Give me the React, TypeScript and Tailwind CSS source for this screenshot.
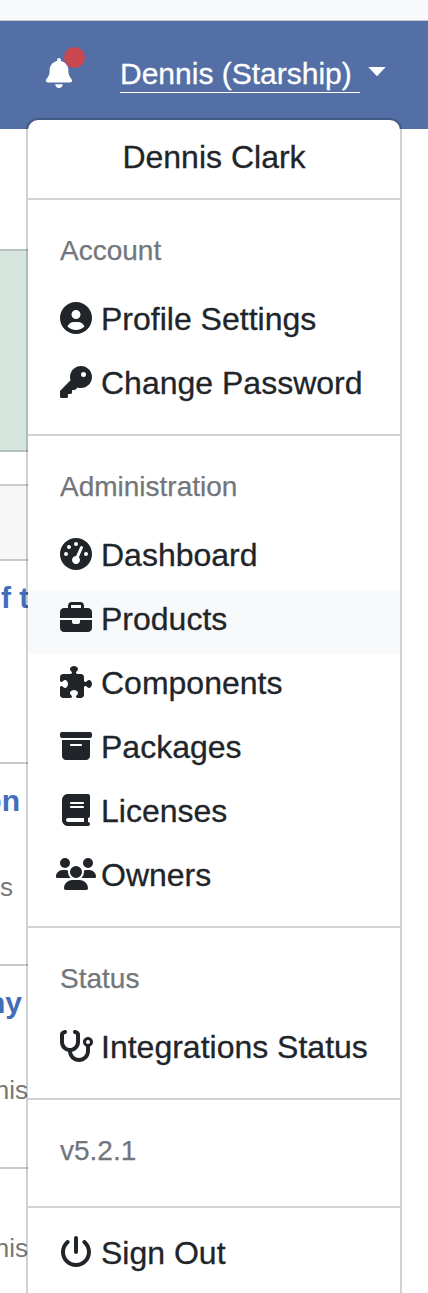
import type { ReactNode } from "react";
import type { IconType } from "react-icons";
import {
  FaBell,
  FaBook,
  FaBoxArchive,
  FaBriefcase,
  FaGaugeHigh,
  FaKey,
  FaPowerOff,
  FaPuzzlePiece,
  FaStethoscope,
  FaUsers,
} from "react-icons/fa6";

function UserCircle({ className }: { className?: string }) {
  return (
    <svg className={className} viewBox="0 0 512 512" fill="currentColor" aria-hidden="true">
      <path
        fillRule="evenodd"
        d="M256 0a256 256 0 1 0 0 512a256 256 0 1 0 0-512zM256 128c39.77 0 72 32.24 72 72s-32.2 72-72 72c-39.76 0-72-32.24-72-72s32.2-72 72-72zM256 448c-52.93 0-100.9-21.53-135.7-56.29C136.5 349.9 176.5 320 224 320h64c47.54 0 87.54 29.88 103.7 71.71C356.9 426.5 308.9 448 256 448z"
      />
    </svg>
  );
}

type ItemProps = { icon: IconType | typeof UserCircle; children: ReactNode; active?: boolean };

function Item({ icon: Icon, children, active }: ItemProps) {
  return (
    <li className={active ? "flex h-16 items-start bg-[#f8f9fa] pl-7" : "flex h-16 items-start pl-7"}>
      <Icon className="mt-3 h-8 w-10 shrink-0" />
      <span className="ml-[5px] mt-[5px] whitespace-nowrap leading-[48px] [-webkit-text-stroke:0.3px]">{children}</span>
    </li>
  );
}

function Heading({ children }: { children: ReactNode }) {
  return (
    <li className="h-[74px] pl-8 pt-[14px] text-[28px] leading-[42px] text-[#72767b] [-webkit-text-stroke:0.25px]">
      {children}
    </li>
  );
}

function Section({ children }: { children: ReactNode }) {
  return <ul className="border-t-2 border-[#d2d2d2] py-4">{children}</ul>;
}

export default function App() {
  return (
    <div className="relative h-[1293px] w-full overflow-hidden bg-white font-['Liberation_Sans',Arial,sans-serif] text-[32px] text-[#212529]">
      <div className="h-[21px] border-b border-[#c3c6cf] bg-[#f8f9fb]" />
      <header className="flex h-[108px] bg-[#546fa6] text-white">
        <div className="relative ml-11 mt-[37px] h-[30px] w-[30px]">
          <FaBell className="size-[30px]" />
          <span className="absolute -top-[11px] left-[20px] size-[21px] rounded-full bg-[#c9474f]" />
        </div>
        <div className="ml-[46px] mt-[33px] h-[39px] w-60 whitespace-pre border-b border-white text-[30px] leading-[39px] [-webkit-text-stroke:0.3px]">
          Dennis (Starship)
        </div>
        <svg className="ml-2 mt-[46px] h-[10px] w-[18px]" viewBox="0 0 18 10" fill="currentColor">
          <path d="M0.3 0H17.7L9 9.2Z" />
        </svg>
      </header>

      <main className="w-7 overflow-hidden whitespace-nowrap text-[26px] leading-[30px] text-[#777777]">
        <div className="mt-[120px] h-[203px] border-y-2 border-[#b3c2bb] bg-[#d6e6de]" />
        <div className="mt-8 h-[77px] border-y-2 border-[#cacaca] bg-[#f7f7f7]" />
        <div className="h-[203px] border-b-2 border-[#cacaca] pl-px pt-5 text-[30px] font-bold leading-[34px] text-[#426ebc]">
          f t
        </div>
        <div className="h-[202px] border-b-2 border-[#cacaca]">
          <div className="flex justify-end pr-2 pt-5 text-[30px] font-bold leading-[34px] text-[#426ebc]">on</div>
          <div className="mt-[54px] flex justify-end pr-[15px]">s</div>
        </div>
        <div className="h-[203px] border-b-2 border-[#cacaca]">
          <div className="flex justify-end pr-[6px] pt-5 text-[30px] font-bold leading-[34px] text-[#426ebc]">ny</div>
          <div className="mt-[55px] flex justify-end">nis</div>
        </div>
        <div className="flex justify-end pt-16">nis</div>
      </main>

      <nav className="absolute left-[26px] top-[118px] h-[1200px] w-[376px] overflow-hidden rounded-xl border-2 border-black/18 bg-white bg-clip-padding">
        <div className="h-[78px] pt-[13px] text-center leading-[48px] [-webkit-text-stroke:0.3px]">Dennis Clark</div>
        <Section>
          <Heading>Account</Heading>
          <Item icon={UserCircle}>Profile Settings</Item>
          <Item icon={FaKey}>Change Password</Item>
        </Section>
        <Section>
          <Heading>Administration</Heading>
          <Item icon={FaGaugeHigh}>Dashboard</Item>
          <Item icon={FaBriefcase} active>Products</Item>
          <Item icon={FaPuzzlePiece}>Components</Item>
          <Item icon={FaBoxArchive}>Packages</Item>
          <Item icon={FaBook}>Licenses</Item>
          <Item icon={FaUsers}>Owners</Item>
        </Section>
        <Section>
          <Heading>Status</Heading>
          <Item icon={FaStethoscope}>Integrations Status</Item>
        </Section>
        <Section>
          <Heading>v5.2.1</Heading>
        </Section>
        <Section>
          <Item icon={FaPowerOff}>Sign Out</Item>
        </Section>
      </nav>
    </div>
  );
}
